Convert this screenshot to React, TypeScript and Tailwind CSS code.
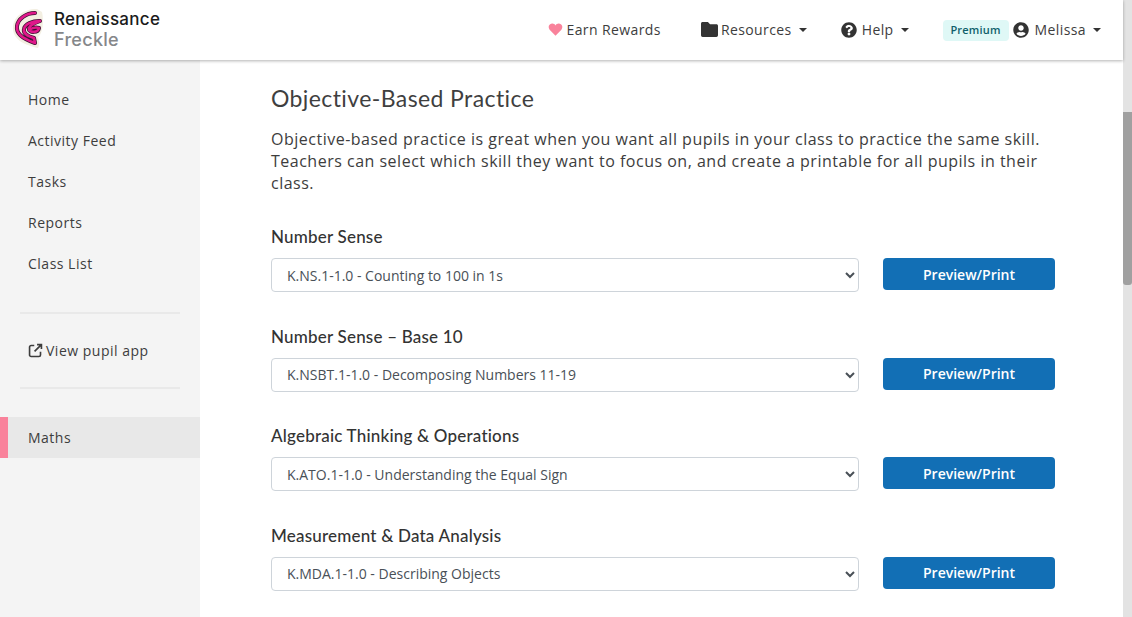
const navItems = ['Home', 'Activity Feed', 'Tasks', 'Reports', 'Class List'];

const practiceRows = [
  { title: 'Number Sense', option: 'K.NS.1-1.0 - Counting to 100 in 1s' },
  { title: 'Number Sense – Base 10', option: 'K.NSBT.1-1.0 - Decomposing Numbers 11-19' },
  { title: 'Algebraic Thinking & Operations', option: 'K.ATO.1-1.0 - Understanding the Equal Sign' },
  { title: 'Measurement & Data Analysis', option: 'K.MDA.1-1.0 - Describing Objects' },
];

function Caret() {
  return <span className="ml-[7px] inline-block border-x-[4px] border-t-[4px] border-x-transparent border-t-[#333]" />;
}

const logoStroke =
  'M22 4 C13 4 5 10 4 17 C3 24 8 29 22 34 L21 29 C14 27 10 24 11 20 C12 15 19 12 27 12 C22 14 16 16 16 20 C17 24 25 24 26 19 C23 18 19 19 16 21';

function Logo() {
  return (
    <svg width="31" height="40" viewBox="0 0 31 40" className="shrink-0">
      <path d="M24 0 C10 0 0 8 0 19 C0 31 12 36 25 39 C27 35 26 31 25 28 C30 24 31 12 29 3 Z" fill="#f3efe2" />
      <path d={logoStroke} fill="none" stroke="#3a1030" strokeWidth="4" strokeLinecap="round" strokeLinejoin="round" />
      <path d={logoStroke} fill="none" stroke="#e0188a" strokeWidth="2.600" strokeLinecap="round" strokeLinejoin="round" />
    </svg>
  );
}

function Header() {
  return (
    <header className="h-[60px] shrink-0 bg-white flex items-center justify-between shadow-[0_1px_3px_rgba(0,0,0,0.3)] relative z-10 text-[14px] tracking-[0.4px] text-[#3d3d3d]">
      <div className="flex items-center ml-[13px] gap-[10px] mb-[2px]">
        <Logo />
        <div className="font-['Inter',sans-serif] font-medium tracking-[0.3px]">
          <div className="text-[17px] leading-[20px] text-[#1b1b1b]">Renaissance</div>
          <div className="text-[18px] leading-[21px] text-[#85878a]">Freckle</div>
        </div>
      </div>
      <nav className="flex items-center mr-[22px] mb-[1px]">
        <span className="flex items-center">
          <svg width="15" height="15" viewBox="0 0 24 24" className="mr-[4px]">
            <path d="M12 22 L2.600 12.200 C-0.500 8.600 1.300 2.800 6.400 2.400 C8.800 2.200 10.800 3.400 12 5.400 C13.200 3.400 15.200 2.200 17.600 2.400 C22.700 2.800 24.500 8.600 21.400 12.200 Z" fill="#f9829b" />
          </svg>
          Earn Rewards
        </span>
        <span className="flex items-center ml-[40px]">
          <svg width="17" height="15" viewBox="0 0 512 448" className="mr-[3px]">
            <path d="M464 64H272L208 0H48C21.500 0 0 21.500 0 48v352c0 26.500 21.500 48 48 48h416c26.500 0 48-21.500 48-48V112c0-26.500-21.500-48-48-48z" fill="#333" />
          </svg>
          Resources
          <Caret />
        </span>
        <span className="flex items-center ml-[34px]">
          <svg width="16" height="16" viewBox="0 0 512 512" className="mr-[5px]">
            <path d="M504 256c0 137-111 248-248 248S8 393 8 256 119 8 256 8s248 111 248 248zM262.700 90c-54.500 0-89.300 23-116.600 63.800-3.500 5.300-2.300 12.400 2.800 16.300l34.700 26.300c5.200 3.900 12.600 3 16.700-2.100 17.900-22.700 30.100-35.800 57.300-35.800 20.400 0 45.700 13.100 45.700 33 0 15-12.400 22.700-32.600 34-23.600 13.200-54.800 29.700-54.800 70.900V304c0 6.600 5.400 12 12 12h56c6.600 0 12-5.400 12-12v-1.400c0-28.500 83.400-29.700 83.400-106.900 0-58.100-60.300-101.700-116.800-101.700zM256 338c-25.400 0-46 20.600-46 46s20.600 46 46 46 46-20.600 46-46-20.600-46-46-46z" fill="#333" fillRule="evenodd" />
          </svg>
          Help
          <Caret />
        </span>
        <span className="ml-[34px] mt-[2px] h-[21px] w-[66px] rounded-[4px] bg-[#dff8f6] text-[#0f5f6b] text-[11px] tracking-[0.2px] font-semibold flex items-center justify-center">
          Premium
        </span>
        <span className="flex items-center ml-[4px]">
          <svg width="16" height="16" viewBox="0 0 496 512" className="mr-[6px]">
            <path d="M248 8C111 8 0 119 0 256s111 248 248 248 248-111 248-248S385 8 248 8zm0 96c48.600 0 88 39.400 88 88s-39.400 88-88 88-88-39.400-88-88 39.400-88 88-88zm0 344c-58.700 0-111.300-26.600-146.500-68.200 18.800-35.400 55.600-59.800 98.500-59.800 2.400 0 4.800.4 7.100 1.100 13 4.200 26.600 6.900 40.900 6.900 14.300 0 28-2.700 40.900-6.900 2.300-.7 4.700-1.100 7.100-1.100 42.900 0 79.700 24.400 98.500 59.800C359.300 421.400 306.700 448 248 448z" fill="#333" />
          </svg>
          Melissa
          <Caret />
        </span>
      </nav>
    </header>
  );
}

function Sidebar() {
  return (
    <aside className="w-[200px] shrink-0 bg-[#f4f4f4] pt-[19px] text-[14px] tracking-[0.5px] text-[#3d3d3d]">
      <ul>
        {navItems.map((item) => (
          <li key={item} className="h-[41px] pl-[28px] flex items-center">{item}</li>
        ))}
      </ul>
      <div className="mx-[20px] mt-[28px] h-[2px] bg-[#e9e9e9]" />
      <div className="h-[73px] pl-[28px] flex items-center">
        <svg width="15" height="15" viewBox="0 0 24 24" fill="none" stroke="#3d3d3d" strokeWidth="2.600" className="mr-[3px]">
          <path d="M10 4H5a2.500 2.500 0 0 0-2.500 2.500V19A2.500 2.500 0 0 0 5 21.500h12.500A2.500 2.500 0 0 0 20 19v-5" />
          <path d="M14.500 2.500h7v7M21 3 10.500 13.500" />
        </svg>
        View pupil app
      </div>
      <div className="mx-[20px] h-[2px] bg-[#e9e9e9]" />
      <div className="mt-[28px] h-[41px] bg-[#e8e8e8] border-l-[8px] border-[#f9829b] pl-[20px] flex items-center">Maths</div>
    </aside>
  );
}

function PracticeRow({ title, option }: { title: string; option: string }) {
  return (
    <div className="mb-[32.67px]">
      <h2 className="text-[17px] leading-[24px] tracking-[0.2px] font-medium text-[#333] font-['Lato',sans-serif] mb-[9px]">{title}</h2>
      <div className="flex items-start">
        <select className="w-[588px] h-[34px] rounded-[4px] border border-[#ced4da] bg-white pl-[11px] text-[14px] text-[#495057]">
          <option>{option}</option>
        </select>
        <button className="ml-[24px] w-[172px] h-[32px] rounded-[4px] bg-[#126fb5] text-white text-[14px] font-semibold">Preview/Print</button>
      </div>
    </div>
  );
}

export default function App() {
  return (
    <div className="h-[617px] w-[1132px] overflow-hidden flex bg-white font-['Open_Sans',sans-serif]">
      <div className="w-[1123px] shrink-0 flex flex-col">
        <Header />
        <div className="flex flex-1 min-h-0">
          <Sidebar />
          <main className="flex-1 pl-[71px] pt-[23px]">
            <h1 className="text-[23px] leading-[30px] tracking-[0.4px] font-['Lato',sans-serif] font-normal text-[#3f3f3f]">Objective-Based Practice</h1>
            <p className="mt-[15px] w-[790px] text-[16px] leading-[22px] tracking-[0.5px] text-[#3d3d3d]">
              Objective-based practice is great when you want all pupils in your class to practice the same skill. Teachers can select which skill they want to focus on, and create a printable for all pupils in their class.
            </p>
            <div className="mt-[31px]">
              {practiceRows.map((row) => (
                <PracticeRow key={row.title} title={row.title} option={row.option} />
              ))}
            </div>
          </main>
        </div>
      </div>
      <div className="w-[9px] shrink-0 bg-[#e3e3e3] pt-[112px]">
        <div className="h-[173px] bg-[#a0a0a0] rounded-b-[3px]" />
      </div>
    </div>
  );
}
